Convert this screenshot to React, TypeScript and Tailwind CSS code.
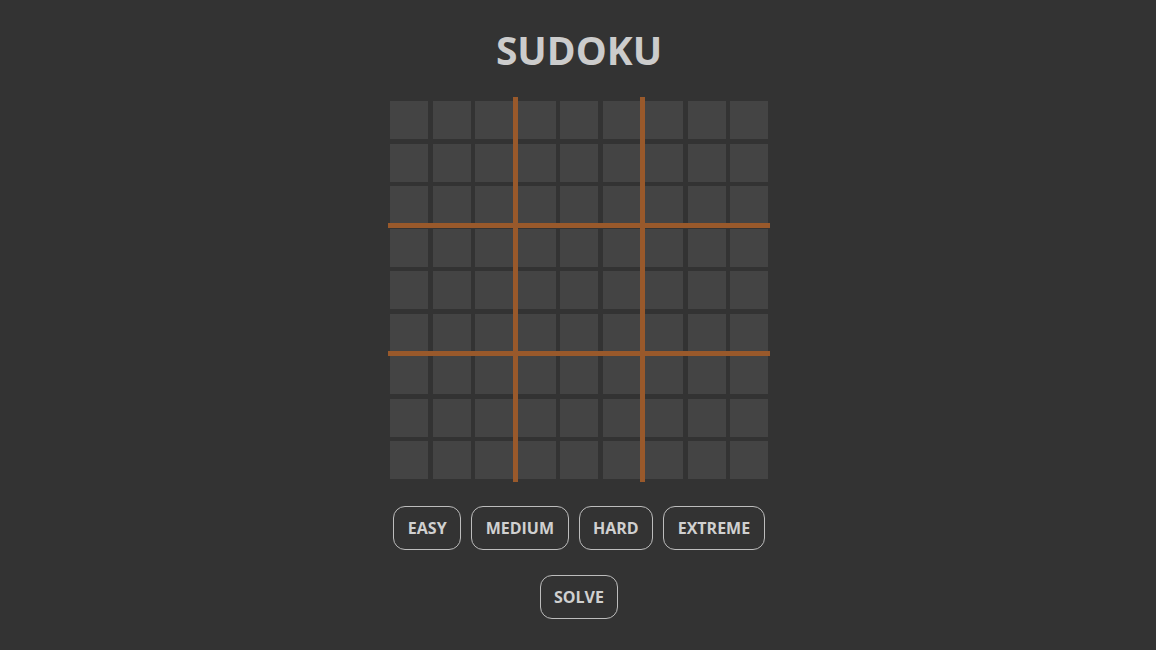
import React from "react";

const levels = ["EASY", "MEDIUM", "HARD", "EXTREME"];

function Btn({ label }: { label: string }) {
  return (
    <button className="h-[44px] px-[13.5px] rounded-[12px] border border-[#bdbdbd] text-[#d0d0d0] text-[16px] font-bold leading-none bg-transparent">
      {label}
    </button>
  );
}

export default function App() {
  const cells = Array.from({ length: 81 }, (_, i) => i);
  return (
    <div
      className="w-full h-[650px] bg-[#333333] flex flex-col items-center"
      style={{ fontFamily: '"Open Sans", "Noto Sans", sans-serif' }}
    >
      <h1 className="mt-[26px] text-[39px] font-bold text-[#cccccc] leading-[48px] ml-[2px]">
        SUDOKU
      </h1>
      <div className="relative mt-[27px] ml-[2px] w-[378px] h-[378px]">
        <div className="grid grid-cols-[repeat(9,38px)] grid-rows-[repeat(9,38px)] gap-x-[4.5px] gap-y-[4.5px]">
          {cells.map((i) => (
            <div key={i} className="bg-[#444444]" />
          ))}
        </div>
        <div className="absolute top-[-4px] bottom-[-3px] left-[123px] w-[5px] bg-[#99592b]" />
        <div className="absolute top-[-4px] bottom-[-3px] left-[250px] w-[5px] bg-[#99592b]" />
        <div className="absolute left-[-2px] right-[-2px] top-[122px] h-[5px] bg-[#99592b]" />
        <div className="absolute left-[-2px] right-[-2px] top-[250px] h-[5px] bg-[#99592b]" />
      </div>
      <div className="mt-[27px] flex gap-[10px] ml-[2px]">
        {levels.map((l) => (
          <Btn key={l} label={l} />
        ))}
      </div>
      <div className="mt-[25px] ml-[2px]">
        <Btn label="SOLVE" />
      </div>
    </div>
  );
}
